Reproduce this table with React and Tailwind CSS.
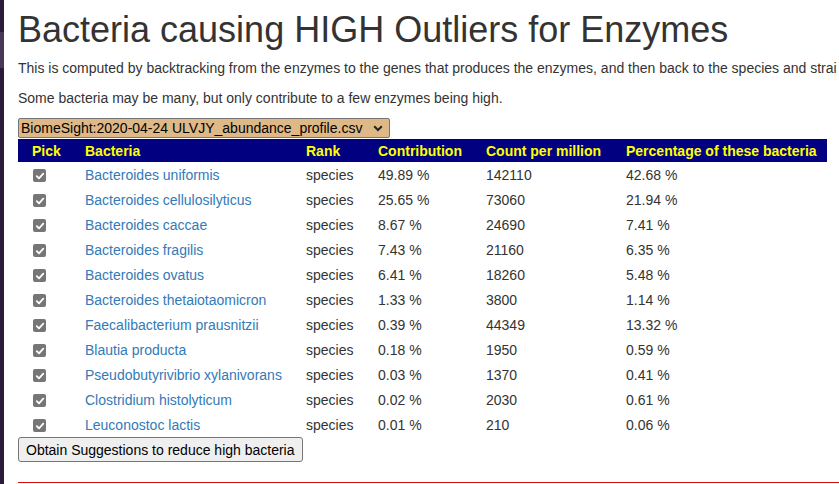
import React from "react";

const rows = [
  ["Bacteroides uniformis", "49.89 %", "142110", "42.68 %"],
  ["Bacteroides cellulosilyticus", "25.65 %", "73060", "21.94 %"],
  ["Bacteroides caccae", "8.67 %", "24690", "7.41 %"],
  ["Bacteroides fragilis", "7.43 %", "21160", "6.35 %"],
  ["Bacteroides ovatus", "6.41 %", "18260", "5.48 %"],
  ["Bacteroides thetaiotaomicron", "1.33 %", "3800", "1.14 %"],
  ["Faecalibacterium prausnitzii", "0.39 %", "44349", "13.32 %"],
  ["Blautia producta", "0.18 %", "1950", "0.59 %"],
  ["Pseudobutyrivibrio xylanivorans", "0.03 %", "1370", "0.41 %"],
  ["Clostridium histolyticum", "0.02 %", "2030", "0.61 %"],
  ["Leuconostoc lactis", "0.01 %", "210", "0.06 %"],
];

function Check() {
  return (
    <span className="inline-flex h-[13px] w-[13px] items-center justify-center rounded-[2px] bg-[#767676] align-middle">
      <svg width="10" height="10" viewBox="0 0 10 10">
        <path d="M1.8 5.2 L4 7.4 L8.3 2.6" fill="none" stroke="white" strokeWidth="1.8" strokeLinecap="round" strokeLinejoin="round" />
      </svg>
    </span>
  );
}

export default function App() {
  return (
    <div className="flex min-h-[484px] bg-white text-[14px] leading-[20px] text-[#333]" style={{ fontFamily: '"Liberation Sans", Arial, sans-serif' }}>
      <div className="flex w-[4px] shrink-0 flex-col">
        <div className="h-[32px] bg-[#2b1b3b]" />
        <div className="h-[36px] bg-[#4a3657]" />
        <div className="flex-1 bg-[#2b1b3b]" />
      </div>
      <div className="min-w-0 flex-1 overflow-hidden pl-[14px]">
        <h1 className="mt-[10px] mb-[8px] whitespace-nowrap text-[36px] leading-[40px] font-normal text-[#333]">
          Bacteria causing HIGH Outliers for Enzymes
        </h1>
        <p className="mb-[10px] whitespace-nowrap">
          This is computed by backtracking from the enzymes to the genes that produces the enzymes, and then back to the species and strai
        </p>
        <p className="mb-[10px] whitespace-nowrap">
          Some bacteria may be many, but only contribute to a few enzymes being high.
        </p>
        <div className="mb-[1px] flex h-[20px] w-[372px] items-center justify-between rounded-[2px] border border-[#767676] bg-[#deb887] pl-[2px] pr-[6px] text-[14px] leading-[17px] text-black">
          <span>BiomeSight:2020-04-24 ULVJY_abundance_profile.csv</span>
          <svg width="10" height="7" viewBox="0 0 10 7">
            <path d="M1.2 1.3 L5 5 L8.8 1.3" fill="none" stroke="#222" strokeWidth="2" />
          </svg>
        </div>
        <table className="w-[809px] table-fixed border-collapse">
          <colgroup>
            <col className="w-[63px]" />
            <col className="w-[221px]" />
            <col className="w-[72px]" />
            <col className="w-[108px]" />
            <col className="w-[140px]" />
            <col className="w-[205px]" />
          </colgroup>
          <thead>
            <tr className="h-[23px] bg-[#000080] text-left font-bold text-[#ffff00]">
              <th className="pl-[14px] text-left">Pick</th>
              <th className="pl-[4px] text-left">Bacteria</th>
              <th className="pl-[4px] text-left">Rank</th>
              <th className="pl-[4px] text-left">Contribution</th>
              <th className="pl-[4px] text-left">Count per million</th>
              <th className="pl-[4px] text-left">Percentage of these bacteria</th>
            </tr>
          </thead>
          <tbody>
            {rows.map((r) => (
              <tr key={r[0]} className="h-[25px]">
                <td className="pl-[15px]"><Check /></td>
                <td className="pl-[4px] whitespace-nowrap text-[#337ab7]">{r[0]}</td>
                <td className="pl-[4px]">species</td>
                <td className="pl-[4px]">{r[1]}</td>
                <td className="pl-[4px]">{r[2]}</td>
                <td className="pl-[4px]">{r[3]}</td>
              </tr>
            ))}
          </tbody>
        </table>
        <button className="h-[25px] rounded-[3px] border border-[#767676] bg-[#efefef] px-[7px] text-[14px] leading-[20px] text-black">
          Obtain Suggestions to reduce high bacteria
        </button>
        <div className="mt-[20px] h-[1px] bg-[#dd1111]" />
      </div>
    </div>
  );
}
